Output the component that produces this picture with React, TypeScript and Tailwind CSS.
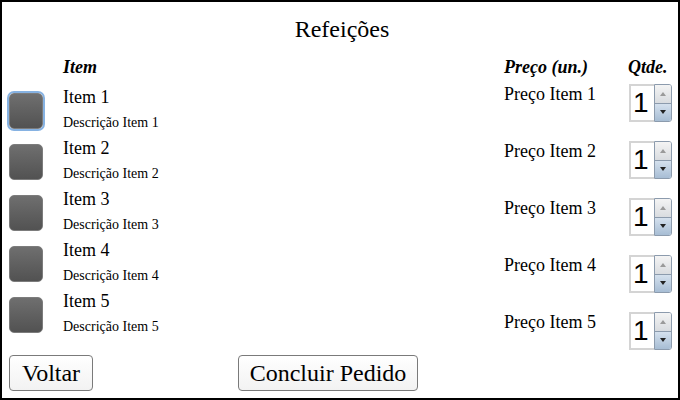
import React from "react";

const ITEMS = [1, 2, 3, 4, 5];

function CheckBox({ focused }: { focused?: boolean }) {
  return (
    <div
      className={`mt-[6px] h-[36px] w-[34px] shrink-0 rounded-[5px] border border-[#7c7c7c] bg-gradient-to-b from-[#6f6f6f] to-[#525252] ${
        focused ? "ring-2 ring-[#86b2e2]" : ""
      }`}
    />
  );
}

function Spinner() {
  return (
    <div className="flex h-[38px] w-[43px] shrink-0">
      <div className="flex w-[25px] items-center border-2 border-r-0 border-[#d4d4d4] bg-white pl-[2px] font-['Liberation_Sans',sans-serif] text-[28px] leading-none text-black">
        1
      </div>
      <div className="flex w-[18px] flex-col overflow-hidden rounded-r-[3px] border border-[#8c9bad]">
        <div className="flex flex-1 items-center justify-center border-b border-[#8c9bad] bg-gradient-to-b from-[#f4f4f4] to-[#d9dce0]">
          <svg width="6" height="4" viewBox="0 0 6 4">
            <path d="M3 0 L6 4 L0 4 Z" fill="#9a9a9a" />
          </svg>
        </div>
        <div className="flex flex-1 items-center justify-center bg-gradient-to-b from-[#d5e1ee] to-[#a7bdd4]">
          <svg width="6" height="4" viewBox="0 0 6 4">
            <path d="M0 0 L6 0 L3 4 Z" fill="#222" />
          </svg>
        </div>
      </div>
    </div>
  );
}

const btn =
  "h-[36px] rounded-[4px] border border-[#7a7a7a] bg-gradient-to-b from-white to-[#f2f2f2] font-['Liberation_Serif',serif] text-[24px] leading-none text-black";

export default function App() {
  return (
    <div className="flex h-[400px] w-[680px] flex-col border-2 border-black bg-white font-['Liberation_Serif',serif] text-black">
      <h1 className="pt-[15px] pl-[4px] text-center font-['Liberation_Serif',serif] text-[24px] font-normal leading-none">
        Refeições
      </h1>

      <div className="mt-[17px] flex">
        {/* Items */}
        <div className="flex-1">
          <div className="pl-[61px] text-[18px] font-bold italic leading-none">Item</div>
          <div className="mt-[11px] pl-[7px]">
            {ITEMS.map((n) => (
              <div key={n} className="flex h-[51px]">
                <CheckBox focused={n === 1} />
                <div className="ml-[20px]">
                  <div className="text-[18px] leading-[20px]">Item {n}</div>
                  <div className="mt-[6px] text-[14px] leading-[20px]">Descrição Item {n}</div>
                </div>
              </div>
            ))}
          </div>
        </div>

        {/* Price + qty */}
        <div className="w-[174px] pr-[6px]">
          <div className="flex text-[18px] font-bold italic leading-none">
            <span className="w-[124px]">Preço (un.)</span>
            <span>Qtde.</span>
          </div>
          <div className="mt-[8px] flex flex-col gap-[19px]">
            {ITEMS.map((n) => (
              <div key={n} className="flex h-[38px]">
                <div className="w-[125px] text-[18px] leading-[20px]">Preço Item {n}</div>
                <Spinner />
              </div>
            ))}
          </div>
        </div>
      </div>

      <div className="mt-auto flex pb-[7px] pl-[7px]">
        <button className={`${btn} w-[84px]`}>Voltar</button>
        <button className={`${btn} ml-[145px] w-[180px]`}>Concluir Pedido</button>
      </div>
    </div>
  );
}
